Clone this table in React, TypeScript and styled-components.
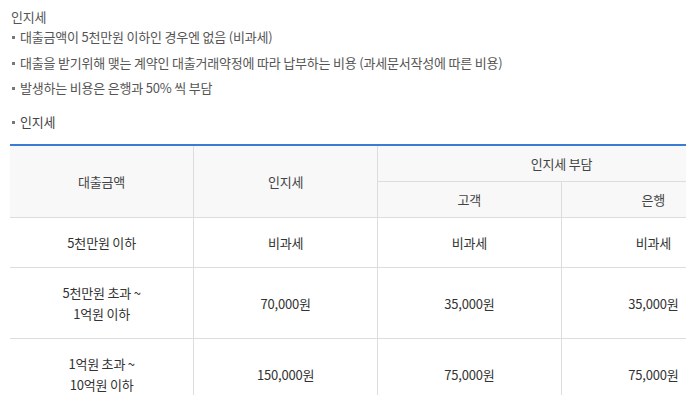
import React from "react";
import styled, { createGlobalStyle } from "styled-components";

const Global = createGlobalStyle`
  html, body {
    margin: 0;
    padding: 0;
    background: #fff;
    overflow: hidden;
  }
  body {
    font-family: "Noto Sans CJK KR", "Noto Sans", sans-serif;
    font-size: 13px;
    letter-spacing: -0.2px;
    color: #555;
  }
`;

const Page = styled.div`
  padding: 7px 0 0 10px;
  width: 735px;
`;

const Title = styled.div`
  line-height: 20px;
  color: #555;
  padding-left: 1px;
`;

const List = styled.ul`
  list-style: none;
  margin: 0;
  padding: 0;
`;

const Item = styled.li<{ $first?: boolean }>`
  position: relative;
  line-height: 20px;
  padding-left: 10px;
  margin-top: ${(p) => (p.$first ? "0" : "5.5px")};
  color: #555;
  &::before {
    content: "";
    position: absolute;
    left: 2px;
    top: 9px;
    width: 3px;
    height: 3px;
    background: #777;
  }
`;

const SubHeading = styled(Item)`
  margin-top: 14px;
  color: #444;
`;

const Table = styled.table`
  margin-top: 12px;
  width: 735px;
  border-collapse: collapse;
  border-top: 2px solid #3a7bd5;
  table-layout: fixed;
`;

const Th = styled.th<{ $first?: boolean }>`
  background: #f8f8f8;
  font-weight: normal;
  color: #444;
  line-height: 21px;
  padding: 7px 4px;
  text-align: center;
  border-bottom: 1px solid #ddd;
  border-left: ${(p) => (p.$first ? "none" : "1px solid #ddd")};
`;

const Td = styled.td<{ $first?: boolean }>`
  color: #333;
  line-height: 21px;
  padding: 14px 4px;
  text-align: center;
  border-bottom: 1px solid #ddd;
  border-left: ${(p) => (p.$first ? "none" : "1px solid #ddd")};
`;

const rows = [
  { amount: ["5천만원 이하"], tax: "비과세", customer: "비과세", bank: "비과세" },
  { amount: ["5천만원 초과 ~", "1억원 이하"], tax: "70,000원", customer: "35,000원", bank: "35,000원" },
  { amount: ["1억원 초과 ~", "10억원 이하"], tax: "150,000원", customer: "75,000원", bank: "75,000원" },
];

export default function App() {
  return (
    <>
      <Global />
      <Page>
        <Title>인지세</Title>
        <List>
          <Item $first>대출금액이 5천만원 이하인 경우엔 없음 (비과세)</Item>
          <Item>대출을 받기위해 맺는 계약인 대출거래약정에 따라 납부하는 비용 (과세문서작성에 따른 비용)</Item>
          <Item>발생하는 비용은 은행과 50% 씩 부담</Item>
          <SubHeading as="li">인지세</SubHeading>
        </List>
        <Table>
          <thead>
            <tr>
              <Th $first rowSpan={2}>대출금액</Th>
              <Th rowSpan={2}>인지세</Th>
              <Th colSpan={2}>인지세 부담</Th>
            </tr>
            <tr>
              <Th>고객</Th>
              <Th>은행</Th>
            </tr>
          </thead>
          <tbody>
            {rows.map((r, i) => (
              <tr key={i}>
                <Td $first>
                  {r.amount.map((line, j) => (
                    <React.Fragment key={j}>
                      {j > 0 && <br />}
                      {line}
                    </React.Fragment>
                  ))}
                </Td>
                <Td>{r.tax}</Td>
                <Td>{r.customer}</Td>
                <Td>{r.bank}</Td>
              </tr>
            ))}
          </tbody>
        </Table>
      </Page>
    </>
  );
}
